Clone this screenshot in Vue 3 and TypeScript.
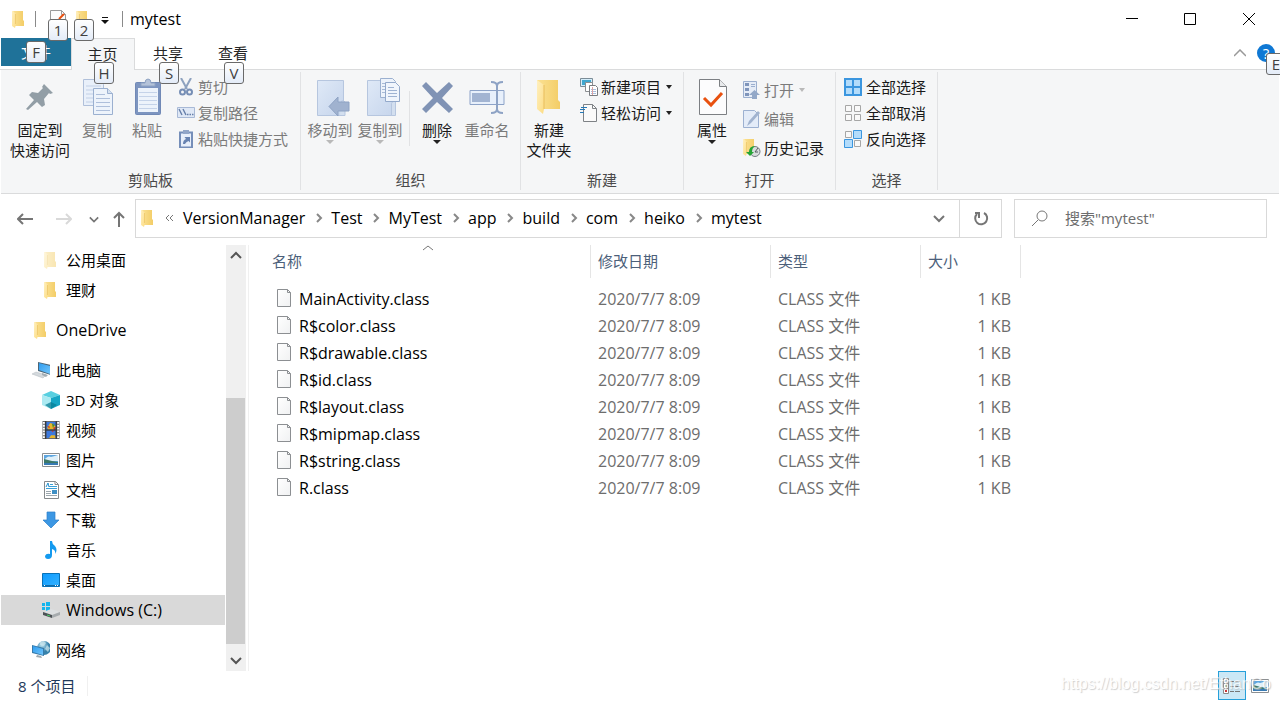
<script setup lang="ts">
interface TreeItem {
  label: string
  icon: string
  root?: boolean
  gap?: boolean
  selected?: boolean
  latin?: boolean
}

interface SmallCommand {
  label: string
  icon: string
  disabled?: boolean
  menu?: boolean
}

const tabs = [
  { label: '主页', key: 'H', active: true },
  { label: '共享', key: 'S', active: false },
  { label: '查看', key: 'V', active: false },
]

const clipboardCommands: SmallCommand[] = [
  { label: '剪切', icon: 'cut', disabled: true },
  { label: '复制路径', icon: 'copy-path', disabled: true },
  { label: '粘贴快捷方式', icon: 'paste-link', disabled: true },
]

const newCommands: SmallCommand[] = [
  { label: '新建项目', icon: 'new-item', menu: true },
  { label: '轻松访问', icon: 'easy-access', menu: true },
]

const openCommands: SmallCommand[] = [
  { label: '打开', icon: 'open', disabled: true, menu: true },
  { label: '编辑', icon: 'edit', disabled: true },
  { label: '历史记录', icon: 'history' },
]

const selectCommands: SmallCommand[] = [
  { label: '全部选择', icon: 'select-all' },
  { label: '全部取消', icon: 'select-none' },
  { label: '反向选择', icon: 'select-invert' },
]

const crumbs = ['VersionManager', 'Test', 'MyTest', 'app', 'build', 'com', 'heiko', 'mytest']

const tree: TreeItem[] = [
  { label: '公用桌面', icon: 'folder-pale' },
  { label: '理财', icon: 'folder' },
  { label: 'OneDrive', icon: 'folder', root: true, gap: true, latin: true },
  { label: '此电脑', icon: 'computer', root: true, gap: true },
  { label: '3D 对象', icon: 'cube' },
  { label: '视频', icon: 'video' },
  { label: '图片', icon: 'picture' },
  { label: '文档', icon: 'document' },
  { label: '下载', icon: 'download' },
  { label: '音乐', icon: 'music' },
  { label: '桌面', icon: 'desktop' },
  { label: 'Windows (C:)', icon: 'drive', selected: true, latin: true },
  { label: '网络', icon: 'network', root: true, gap: true },
]

const files = [
  'MainActivity.class',
  'R$color.class',
  'R$drawable.class',
  'R$id.class',
  'R$layout.class',
  'R$mipmap.class',
  'R$string.class',
  'R.class',
].map((name) => ({ name, date: '2020/7/7 8:09', type: 'CLASS 文件', size: '1 KB' }))
</script>

<template>
  <div class="window">
    <svg class="sprite" aria-hidden="true">
      <defs>
        <linearGradient id="gFolder" x1="0" x2="1"><stop offset="0" stop-color="#fbe193" /><stop offset="1" stop-color="#f3cd67" /></linearGradient>
        <linearGradient id="gFlap" x1="0" x2="1" y2="1"><stop offset="0" stop-color="#fff0c0" /><stop offset="1" stop-color="#fcdc83" /></linearGradient>
        <linearGradient id="gBlue" x2="1" y2="1"><stop offset="0" stop-color="#dfe9f7" /><stop offset="1" stop-color="#c6d5ec" /></linearGradient>
        <linearGradient id="gScreen" x2="1" y2="1"><stop offset="0" stop-color="#2f9df0" /><stop offset="1" stop-color="#72c5fa" /></linearGradient>
        <linearGradient id="gDesk" x2="1" y2="1"><stop offset="0" stop-color="#0d9bff" /><stop offset="1" stop-color="#35b2ff" /></linearGradient>
        <linearGradient id="gPaper" x2="1" y2="1"><stop offset="0" stop-color="#fff" /><stop offset="1" stop-color="#f0f1f2" /></linearGradient>
        <radialGradient id="gGlobe" cx=".35" cy=".3"><stop offset="0" stop-color="#b9e0ee" /><stop offset="1" stop-color="#3782ab" /></radialGradient>
      </defs>
      <symbol id="folder" viewBox="0 0 18 18">
        <path d="M3 1h10v9l1 1v5H4z" fill="url(#gFolder)" />
        <path d="M2 1h1l3 3v10l-1 4-3-2z" fill="url(#gFlap)" />
        <path d="M5.500 4v10" stroke="#f0cc72" />
      </symbol>
      <symbol id="folder-pale" viewBox="0 0 18 18"><g opacity=".5"><use href="#folder" width="18" height="18" /></g></symbol>
      <symbol id="folder-big" viewBox="0 0 40 40">
        <path d="M8 2h21v20l2 2v7H9z" fill="url(#gFolder)" />
        <path d="M8 2l7 5v24l-1 5-6-5z" fill="url(#gFlap)" />
        <path d="M15 7v24" stroke="#e8bd5c" />
      </symbol>
      <symbol id="pin" viewBox="0 0 40 40">
        <path d="M24 6l9 9-3 1-1-1-5 6 1 6-3 2-5-5-9 8-2-1 8-9-5-5 3-3 6 1 5-5-1-1z" fill="#929ea6" />
      </symbol>
      <symbol id="copy" viewBox="0 0 40 40">
        <path d="M6.500 1.500h15l5 5v21h-20z" fill="#e9f0fa" stroke="#b0c0da" />
        <path d="M9 8h15M9 12h15M9 16h8M9 20h8M9 24h8" stroke="#c2d0e6" />
        <path d="M16.500 10.500h14l5 5v21h-19z" fill="#edf3fb" stroke="#9bb0d0" />
        <path d="M30.500 10.500v5h5" fill="#d4e0f0" stroke="#9bb0d0" />
        <path d="M19 16.500h9M19 20.500h14M19 24.500h14M19 28.500h14M19 32.500h14" stroke="#aebfdb" />
      </symbol>
      <symbol id="paste" viewBox="0 0 40 40">
        <rect x="8.500" y="4.500" width="25" height="32" rx="1" fill="#7d95c0" stroke="#7189b6" />
        <path d="M11 10h20v24H11z" fill="#edf3fb" />
        <path d="M12 14.500h18M12 18.500h18M12 22.500h18M12 26.500h18M12 30.500h18" stroke="#c5d3e9" />
        <path d="M14 8V5h4q0-4 3-4t3 4h4v3z" fill="#b5c3d9" stroke="#8fa3c3" />
      </symbol>
      <symbol id="cut" viewBox="0 0 18 18">
        <path d="M4 0l6 11M14 0L8 11" fill="none" stroke="#8ea2bf" stroke-width="2" />
        <circle cx="5.500" cy="14" r="2.500" fill="none" stroke="#768eb5" stroke-width="2" />
        <circle cx="12.500" cy="14" r="2.500" fill="none" stroke="#768eb5" stroke-width="2" />
      </symbol>
      <symbol id="copy-path" viewBox="0 0 18 18">
        <path d="M.5 3.500h17v10H.5z" fill="#dfe8f6" stroke="#a8b9d6" />
        <path d="M2 5l3 6M6 5l3 6M10 10.500h1.500M12.500 10.500H14M15 10.500h1.500" stroke="#667fa9" stroke-width="1.400" />
      </symbol>
      <symbol id="paste-link" viewBox="0 0 18 18">
        <path d="M3 2.500h12v15H3z" fill="#e8effa" stroke="#758eb9" stroke-width="2" />
        <path d="M6 0h6v4H6z" fill="#92a6c8" />
        <path d="M6 14q0-4 3-5L7.500 7H13v5.500L11.500 11Q9 12 8 14z" fill="#6883b1" />
      </symbol>
      <symbol id="move-to" viewBox="0 0 40 40">
        <path d="M7.500 2.500h26v35h-26z" fill="url(#gBlue)" stroke="#b6c6df" />
        <path d="M31 23.500q4-2 4 2v12h-5" fill="#d3dfef" stroke="#b6c6df" />
        <path d="M19 28.500L28 19v5h11v9H28v5z" fill="#a0b2cf" stroke="#8ea3c4" />
      </symbol>
      <symbol id="copy-to" viewBox="0 0 40 40">
        <path d="M7.500 2.500h27v35h-27z" fill="url(#gBlue)" stroke="#b6c6df" />
        <path d="M31.500 37.500v-12q1-4 4-2v14z" fill="#d3dfef" stroke="#b6c6df" />
        <path d="M20.500.5h12l3 3v16h-15z" fill="#edf3fb" stroke="#9bb0d0" />
        <path d="M22 5.500h8M22 8.500h4M22 11.500h4M22 14.500h4" stroke="#a9bbd6" />
        <path d="M25.500 4.500h10l4 4v15h-14z" fill="#f0f5fc" stroke="#93a9cb" />
        <path d="M28 9.500h6M28 12.500h9M28 15.500h9M28 18.500h9" stroke="#9fb3d2" />
      </symbol>
      <symbol id="delete" viewBox="0 0 40 40">
        <path d="M5 8l4-4 11 11L32 4l4 4-11 12 11 11-4 4-12-11L9 35l-4-4 11-11z" fill="#8093b5" />
      </symbol>
      <symbol id="rename" viewBox="0 0 40 40">
        <path d="M3 12.500h34v14H3z" fill="#e8f0fb" stroke="#8da3c8" />
        <path d="M5 15h18v9H5z" fill="#a2b4d2" />
        <path d="M24 4q6 0 6 4v23q0 4-6 4M36 4q-6 0-6 4v23q0 4 6 4" fill="none" stroke="#8ea3c5" stroke-width="2" />
      </symbol>
      <symbol id="properties" viewBox="0 0 40 40">
        <path d="M7.500 1.500h20l7 7v28h-27z" fill="#fcfcfd" stroke="#7c7f83" />
        <path d="M27.500 1.500v7h7" fill="#e8eaec" stroke="#7c7f83" />
        <path d="M12 20l7 7 11-12" fill="none" stroke="#e8500f" stroke-width="3" />
      </symbol>
      <symbol id="new-item" viewBox="0 0 18 18">
        <path d="M.5.500h12v8H.5z" fill="#d4edfa" stroke="#7b8c97" />
        <path d="M2 2h9v5H2z" fill="#40a7cf" />
        <path d="M5.500 4.500h7v9h-7z" fill="#fff" stroke="#8b8e91" />
        <path d="M9.500 7.500h6l2 2v8h-8z" fill="#fff" stroke="#797c80" />
        <path d="M11 11.500h5M11 13.500h5M11 15.500h5" stroke="#a9bddb" />
        <path d="M12.500 9v8" stroke="#dda2a2" />
      </symbol>
      <symbol id="easy-access" viewBox="0 0 18 18">
        <path d="M3.500.5h9l4 4v13h-13z" fill="#fafafa" stroke="#7e8286" />
        <path d="M12.500.5v4h4" fill="none" stroke="#7e8286" />
        <path d="M1 3.500h6M0 5.500h5M0 8.500h4" stroke="#2679b7" />
      </symbol>
      <symbol id="open" viewBox="0 0 18 18">
        <path d="M.5.500h13v16H.5z" fill="#e5ecf7" stroke="#9bafcf" />
        <path d="M2 2h4v3H2zM2 7h4v3H2zM2 12h4v3H2z" fill="#7f95bb" />
        <path d="M8 3.500h4M8 5.500h4" stroke="#9bafcf" />
        <path d="M11.500 9l5.500 5h-3v4H9v-4H6z" fill="#93a8c8" />
      </symbol>
      <symbol id="edit" viewBox="0 0 18 18">
        <path d="M.5.500h11l4 4v13H.5z" fill="#e4ecf8" stroke="#9db1d1" />
        <path d="M4 16l2-5L15 1l2 2-9 10z" fill="#a1b3cf" />
      </symbol>
      <symbol id="history" viewBox="0 0 18 18">
        <use href="#folder" x="-2" y="-1" width="18" height="18" />
        <circle cx="12" cy="12.500" r="5" fill="#d8dcdd" stroke="#747d82" />
        <path d="M12 13l3-4M12 13h3" stroke="#555e63" />
        <path d="M12 7q-6 0-6 6H3l4 4 4-4H9q0-4 3-6z" fill="#25a435" />
      </symbol>
      <symbol id="select-all" viewBox="0 0 18 18">
        <path d="M0 0h18v18H0z" fill="#3b96df" />
        <path d="M2 2h6v6H2zM10 2h6v6h-6zM2 10h6v6H2zM10 10h6v6h-6z" fill="#b3dcfb" />
      </symbol>
      <symbol id="select-none" viewBox="0 0 18 18">
        <path d="M1.500 1.500h6v6h-6zM10.500 1.500h6v6h-6zM1.500 10.500h6v6h-6zM10.500 10.500h6v6h-6z" fill="#f9f9f9" stroke="#a6a6a6" />
      </symbol>
      <symbol id="select-invert" viewBox="0 0 18 18">
        <path d="M1.500 1.500h6v6h-6zM10.500 10.500h6v6h-6z" fill="#f9f9f9" stroke="#a6a6a6" />
        <path d="M9.500.500h8v8h-8zM.5 9.500h8v8h-8z" fill="#b3dcfb" stroke="#3b96df" />
      </symbol>
      <symbol id="computer" viewBox="0 0 18 18">
        <path d="M6 1l13 3v10L6 10z" fill="#4b6577" />
        <path d="M7 2l11 3v8L7 9z" fill="url(#gScreen)" />
        <path d="M0 13l4-2 10 3-3 3z" fill="#d4d9dd" stroke="#b1b9be" stroke-width=".5" />
        <path d="M10 12l6 2-2 2-4-2z" fill="#a3adb3" />
      </symbol>
      <symbol id="cube" viewBox="0 0 18 18">
        <path d="M0 4l9-4 9 4-9 3z" fill="#58cfe0" />
        <path d="M0 4l9 3v11l-9-4z" fill="#abeaf2" />
        <path d="M18 4L9 7v11l9-4z" fill="#16a6c5" />
        <path d="M3 14l6-3 6 3-6 4z" fill="#087d94" opacity=".75" />
      </symbol>
      <symbol id="video" viewBox="0 0 18 19">
        <path d="M0 0h18v19H0z" fill="#67696b" />
        <path d="M1.500 1v17M16.500 1v17" stroke="#fff" stroke-width="2" stroke-dasharray="2 1" />
        <path d="M4 1h10v8H4zM4 10h10v8H4z" fill="#3c79dd" />
        <path d="M5 7l3-5 3 1 3 3-2 3H6zM7 18l2-3h4l1 3z" fill="#e6b52b" />
        <path d="M5 5l3 1-1 2zM11 7l3-1-1 4zM9 10h3l-1 2z" fill="#cf3929" />
        <path d="M10 3l3 1-2 3z" fill="#438c36" />
        <path d="M3.500 0v19M14.500 0v19M4 9.500h10" stroke="#242628" />
      </symbol>
      <symbol id="picture" viewBox="0 0 18 18">
        <path d="M.5 2.500h17v13H.5z" fill="#fff" stroke="#8b8f92" />
        <path d="M2 4h14v10H2z" fill="#5da5df" />
        <path d="M2 9q4-5 7-3 4-1 7-2v6H2z" fill="#dff0f9" />
        <path d="M2 8l4 1 4 1 6 1v2H2z" fill="#3c7868" />
        <path d="M2 12h14v2H2z" fill="#377ab4" />
      </symbol>
      <symbol id="document" viewBox="0 0 18 18">
        <path d="M2.500.500h11l3 3v14h-14z" fill="#fff" stroke="#85898c" />
        <path d="M13 .5v3h3" fill="none" stroke="#85898c" />
        <path d="M8 3.500h3M7 5.500h8M4 7.500h11" stroke="#3ba0d7" />
        <path d="M4 10.500h5M4 12.500h5M4 14.500h11" fill="none" stroke="#9ba6ad" />
        <path d="M4 6l2-4 1 4" fill="none" stroke="#2491cf" />
        <path d="M10 9h5v4h-5z" fill="#3f8fc4" />
      </symbol>
      <symbol id="download" viewBox="0 0 18 18">
        <path d="M5 1h8v8h4l-8 8-8-8h4z" fill="#3c97e3" stroke="#2c7fc9" stroke-width=".7" />
      </symbol>
      <symbol id="music" viewBox="0 0 18 18">
        <path d="M8 0h2q0 3 3 5 3 4 0 8 1-4-3-5v6q0 4-4 4-3 0-3-3 1-3 5-2z" fill="#149aef" />
      </symbol>
      <symbol id="desktop" viewBox="0 0 18 18">
        <path d="M.5 2.500h17v13H.5z" fill="url(#gDesk)" stroke="#0872b8" />
        <path d="M1 14.500h16" stroke="#126ba7" /><path d="M2 14.500h1M13 14.500h1M15 14.500h1" stroke="#fff" />
      </symbol>
      <symbol id="drive" viewBox="0 0 18 18">
        <path d="M0 2h3v3H0zM4 1h4v4H4zM0 6h3v3H0zM4 6h4v4H4z" fill="#15b5ed" />
        <path d="M1 11l8-3 9 3-8 3z" fill="#dcdfe1" />
        <path d="M1 11l9 3v3l-9-3z" fill="#4c5256" />
        <path d="M10 14l8-3v3l-8 3z" fill="#a6abae" /><path d="M5 14l3 1" stroke="#48cd63" />
      </symbol>
      <symbol id="network" viewBox="0 0 18 18">
        <circle cx="12" cy="7" r="7" fill="url(#gGlobe)" />
        <path d="M8 1l4-1 2 2-2 3-4-1zM15 4l3 3-2 4-3-3z" fill="#d1eaf0" opacity=".7" />
        <path d="M0 4l12 3v8L0 12z" fill="#377bab" /><path d="M1 5l10 3v6L1 11z" fill="url(#gScreen)" />
        <path d="M5 14l4 1 1 2-6-1z" fill="#9ea8ad" />
      </symbol>
      <symbol id="file" viewBox="0 0 18 20">
        <path d="M1.500.5h10l3 3v14h-13z" fill="url(#gPaper)" stroke="#8c8f92" />
        <path d="M11.500.5v3h3" fill="none" stroke="#8c8f92" />
      </symbol>
      <symbol id="chevron-down" viewBox="0 0 12 12"><path d="M1 4l5 5 5-5" fill="none" stroke="currentColor" stroke-width="2" /></symbol>
      <symbol id="chevron-up" viewBox="0 0 12 12"><path d="M1 8l5-5 5 5" fill="none" stroke="currentColor" stroke-width="2" /></symbol>
    </svg>

    <header class="titlebar">
      <svg class="i18 app-icon"><use href="#folder" /></svg>
      <span class="title-rule"></span>
      <button class="quick" aria-label="属性">
        <svg width="16" height="18" viewBox="0 0 16 18"><path d="M.5.500h11l4 4v13H.5z" fill="#fbfbfb" stroke="#999" /><path d="M11.500.500v4h4" fill="none" stroke="#999" /><path d="M9 9l5-5" stroke="#e8500f" stroke-width="2" /></svg>
        <kbd class="keytip">1</kbd>
      </button>
      <button class="quick" aria-label="新建文件夹">
        <svg class="i18"><use href="#folder" /></svg>
        <kbd class="keytip">2</kbd>
      </button>
      <button class="customize" aria-label="自定义快速访问工具栏">
        <svg width="8" height="8" viewBox="0 0 8 8"><path d="M1 1.500h6" stroke="#111" /><path d="M0 4h8L4 8z" fill="#111" /></svg>
      </button>
      <span class="title-rule"></span>
      <h1 class="title">mytest</h1>
      <div class="controls">
        <button aria-label="最小化"><svg width="12" height="12"><path d="M0 5.500h12" stroke="#000" /></svg></button>
        <button aria-label="最大化"><svg width="12" height="12"><path d="M.5.500h11v11H.5z" fill="none" stroke="#000" /></svg></button>
        <button aria-label="关闭"><svg width="12" height="12"><path d="M0 0l12 12M12 0L0 12" stroke="#000" /></svg></button>
      </div>
    </header>

    <nav class="tabs">
      <button class="tab file">文件<kbd class="keytip">F</kbd></button>
      <button v-for="t in tabs" :key="t.key" class="tab" :class="{ active: t.active }">
        {{ t.label }}<kbd class="keytip">{{ t.key }}</kbd>
      </button>
      <span class="spacer"></span>
      <button class="collapse" aria-label="最小化功能区">
        <svg width="12" height="8" viewBox="0 0 12 8"><path d="M0 7l6-6 6 6" fill="none" stroke="#999" stroke-width="1.500" /></svg>
      </button>
      <button class="help" aria-label="帮助"><span class="help-mark">?</span><kbd class="keytip">E</kbd></button>
    </nav>

    <section class="ribbon">
      <div class="group g-clipboard">
        <div class="commands">
          <button class="big wide"><svg class="i40"><use href="#pin" /></svg><span>固定到<br />快速访问</span></button>
          <button class="big off"><svg class="i40"><use href="#copy" /></svg><span>复制</span></button>
          <button class="big off"><svg class="i40"><use href="#paste" /></svg><span>粘贴</span></button>
          <div class="stack">
            <button v-for="c in clipboardCommands" :key="c.icon" class="small" :class="{ off: c.disabled }">
              <svg class="i18"><use :href="'#' + c.icon" /></svg><span>{{ c.label }}</span>
            </button>
          </div>
        </div>
        <h2>剪贴板</h2>
      </div>
      <div class="group g-organize">
        <div class="commands">
          <button class="big off"><svg class="i40"><use href="#move-to" /></svg><span>移动到</span><i class="arrow"></i></button>
          <button class="big off"><svg class="i40"><use href="#copy-to" /></svg><span>复制到</span><i class="arrow"></i></button>
          <span class="divider"></span>
          <button class="big"><svg class="i40"><use href="#delete" /></svg><span>删除</span><i class="arrow"></i></button>
          <button class="big off"><svg class="i40"><use href="#rename" /></svg><span>重命名</span></button>
        </div>
        <h2>组织</h2>
      </div>
      <div class="group g-new">
        <div class="commands">
          <button class="big"><svg class="i40"><use href="#folder-big" /></svg><span>新建<br />文件夹</span></button>
          <div class="stack">
            <button v-for="c in newCommands" :key="c.icon" class="small">
              <svg class="i18"><use :href="'#' + c.icon" /></svg><span>{{ c.label }}</span><i class="arrow"></i>
            </button>
          </div>
        </div>
        <h2>新建</h2>
      </div>
      <div class="group g-open">
        <div class="commands">
          <button class="big"><svg class="i40"><use href="#properties" /></svg><span>属性</span><i class="arrow"></i></button>
          <div class="stack loose">
            <button v-for="c in openCommands" :key="c.icon" class="small" :class="{ off: c.disabled }">
              <svg class="i18"><use :href="'#' + c.icon" /></svg><span>{{ c.label }}</span><i v-if="c.menu" class="arrow"></i>
            </button>
          </div>
        </div>
        <h2>打开</h2>
      </div>
      <div class="group g-select">
        <div class="commands">
          <div class="stack">
            <button v-for="c in selectCommands" :key="c.icon" class="small">
              <svg class="i18"><use :href="'#' + c.icon" /></svg><span>{{ c.label }}</span>
            </button>
          </div>
        </div>
        <h2>选择</h2>
      </div>
    </section>

    <div class="navbar">
      <div class="history-buttons">
        <button aria-label="返回"><svg width="16" height="14" viewBox="0 0 16 14"><path d="M6 2L1 7l5 5M1 7h15" fill="none" stroke="#757575" stroke-width="2" /></svg></button>
        <button aria-label="前进"><svg width="16" height="14" viewBox="0 0 16 14"><path d="M10 2l5 5-5 5M15 7H0" fill="none" stroke="#d9d9d9" stroke-width="2" /></svg></button>
        <button class="recent" aria-label="最近浏览的位置"><svg width="10" height="10"><use href="#chevron-down" /></svg></button>
        <button class="up" aria-label="上移"><svg width="12" height="16" viewBox="0 0 12 16"><path d="M1 7l5-5 5 5M6 2v14" fill="none" stroke="#757575" stroke-width="2" /></svg></button>
      </div>
      <div class="address">
        <svg class="i18"><use href="#folder" /></svg>
        <button class="more" aria-label="更多位置"><svg width="9" height="8" viewBox="0 0 9 8"><path d="M4 1L1 4l3 3M8 1L5 4l3 3" fill="none" stroke="#777" /></svg></button>
        <template v-for="(c, i) in crumbs" :key="c">
          <svg v-if="i > 0" class="sep" viewBox="0 0 8 10"><path d="M2 1l4 4-4 4" fill="none" stroke="#888" stroke-width="2" /></svg>
          <button class="crumb">{{ c }}</button>
        </template>
        <span class="spacer"></span>
        <button class="drop" aria-label="以前的位置"><svg width="12" height="12"><use href="#chevron-down" /></svg></button>
        <button class="refresh" aria-label="刷新"><svg width="16" height="16" viewBox="0 0 16 16"><path d="M4 3a6 6 0 1 0 7-1" fill="none" stroke="#757575" stroke-width="2" /><path d="M2 2h4v5" fill="none" stroke="#757575" stroke-width="2" /></svg></button>
      </div>
      <label class="search">
        <svg width="16" height="16" viewBox="0 0 16 16"><circle cx="10" cy="6" r="5" fill="none" stroke="#777" /><path d="M6 10l-6 6" stroke="#777" /></svg>
        <input type="text" aria-label="搜索" placeholder="搜索&quot;mytest&quot;" />
      </label>
    </div>

    <main class="body">
      <aside class="tree">
        <a v-for="n in tree" :key="n.label" href="#" class="node" :class="{ root: n.root, gap: n.gap, selected: n.selected, latin: n.latin }">
          <svg class="i18"><use :href="'#' + n.icon" /></svg><span>{{ n.label }}</span>
        </a>
      </aside>
      <div class="scrollbar">
        <button aria-label="向上滚动"><svg width="12" height="12"><use href="#chevron-up" /></svg></button>
        <span class="track"></span>
        <span class="thumb"></span>
        <button aria-label="向下滚动"><svg width="12" height="12"><use href="#chevron-down" /></svg></button>
      </div>
      <div class="files">
        <table>
          <thead>
            <tr>
              <th class="c-name">名称<svg class="sort" width="10" height="6" viewBox="0 0 10 6"><path d="M0 5l5-4 5 4" fill="none" stroke="#777" /></svg></th>
              <th class="c-date">修改日期</th>
              <th class="c-type">类型</th>
              <th class="c-size">大小</th>
            </tr>
          </thead>
          <tbody>
            <tr v-for="f in files" :key="f.name">
              <td class="name"><div><svg width="18" height="20"><use href="#file" /></svg><span>{{ f.name }}</span></div></td>
              <td>{{ f.date }}</td>
              <td>{{ f.type }}</td>
              <td class="size">{{ f.size }}</td>
            </tr>
          </tbody>
        </table>
      </div>
    </main>

    <footer class="status">
      <span class="count">8 个项目</span>
      <span class="spacer"></span>
      <button class="view on" aria-label="详细信息">
        <svg width="18" height="18" viewBox="0 0 18 18"><path d="M.5 1.500h5v15h-5zM.5 6.500h5M.5 11.500h5" fill="#fff" stroke="#888" /><path d="M2 4h2" stroke="#447bb0" stroke-width="2" /><path d="M2 9h2" stroke="#487b52" stroke-width="2" /><path d="M2 14h2" stroke="#c33" stroke-width="2" /><path d="M7 4.500h4M12 4.500h5M7 9.500h4M12 9.500h5M7 14.500h4M12 14.500h5" stroke="#777" /></svg>
      </button>
      <button class="view" aria-label="大缩略图"><svg class="i18"><use href="#picture" /></svg></button>
      <span class="watermark">https://blog.csdn.net/EthanCo</span>
    </footer>
  </div>
</template>

<style>
html,
body {
  margin: 0;
  background: #fff;
}
</style>

<style scoped>
* {
  box-sizing: border-box;
}
.window {
  display: flex;
  flex-direction: column;
  min-height: 100vh;
  overflow: hidden;
  background: #fff;
  color: #1a1a1a;
  font: 15px/20px "Open Sans", "Noto Sans CJK SC", sans-serif;
}
.sprite {
  position: absolute;
  width: 0;
  height: 0;
}
button {
  display: flex;
  align-items: center;
  padding: 0;
  border: 0;
  background: none;
  color: inherit;
  font: inherit;
}
svg {
  display: block;
  flex: none;
}
.i18 {
  width: 18px;
  height: 18px;
}
.i40 {
  width: 40px;
  height: 40px;
}
.spacer {
  flex: 1;
}
.keytip {
  position: absolute;
  z-index: 2;
  width: 20px;
  height: 22px;
  border: 1px solid #6a6a6a;
  border-radius: 3px;
  background: linear-gradient(#fff, #e4ecf8);
  color: #404040;
  font: inherit;
  line-height: 20px;
  text-align: center;
}

.titlebar {
  display: flex;
  align-items: center;
  height: 38px;
  padding-left: 10px;
}
.title-rule {
  width: 1px;
  height: 16px;
  background: #8a8a8a;
}
.app-icon {
  margin-right: 7px;
}
.quick {
  position: relative;
  margin-left: 14px;
}
.quick + .quick {
  margin-left: 8px;
}
.quick .keytip {
  top: 9px;
  left: -2px;
}
.quick + .quick .keytip {
  left: 0;
}
.customize {
  margin: 2px 13px 0 9px;
}
.title {
  flex: 1;
  margin: 0 0 0 7px;
  color: #000;
  font: inherit;
  font-size: 16px;
}
.controls {
  display: flex;
  padding-right: 1px;
}
.controls button {
  justify-content: center;
  width: 58px;
  height: 38px;
}
.controls button:last-child {
  width: 60px;
}

.tabs {
  display: flex;
  height: 32px;
  padding-left: 1px;
  border-bottom: 1px solid #dadbdc;
}
.tab {
  position: relative;
  justify-content: center;
  width: 65px;
  height: 31px;
  padding: 0 1px 2px 0;
  color: #262626;
}
.tab .keytip {
  top: 24px;
  left: 23px;
}
.tab.file {
  width: 70px;
  height: 28px;
  padding: 0;
  background: #1f7299;
  color: #fff;
}
.tab.file .keytip {
  top: 3px;
  left: 25px;
}
.tab.active {
  width: 64px;
  height: 32px;
  margin-right: 1px;
  border: 1px solid #dadbdc;
  border-bottom: 0;
  background: #f5f6f7;
}
.tab.active .keytip {
  top: 23px;
  left: 22px;
}
.collapse {
  margin-right: 11px;
  padding-bottom: 2px;
}
.help {
  position: relative;
  width: 23px;
  padding-bottom: 2px;
}
.help-mark {
  width: 18px;
  height: 18px;
  border-radius: 50%;
  background: #0f78d4;
  color: #fff;
  line-height: 18px;
  text-align: center;
}
.help .keytip {
  top: 15px;
  left: 9px;
}

.ribbon {
  display: flex;
  height: 124px;
  margin: 0 1px;
  padding: 2px 0 3px;
  border-bottom: 1px solid #dadbdc;
  background: #f5f6f7;
}
.group {
  display: flex;
  flex-direction: column;
  justify-content: space-between;
  border-right: 1px solid #e1e2e4;
}
.g-clipboard {
  width: 300px;
}
.g-organize {
  width: 220px;
}
.g-new {
  width: 163px;
}
.g-open {
  width: 152px;
}
.g-select {
  width: 102px;
}
.group h2 {
  margin: 0;
  color: #4a4a4a;
  font: inherit;
  text-align: center;
}
.commands {
  display: flex;
  padding-left: 3px;
}
.g-clipboard .commands {
  padding-left: 7px;
}
.g-organize .commands {
  padding-left: 4px;
}
.g-select .commands {
  padding-left: 8px;
}
.big {
  flex-direction: column;
  justify-content: flex-start;
  width: 50px;
  padding-top: 6px;
  white-space: nowrap;
}
.big svg {
  margin-bottom: 2px;
}
.big.wide {
  width: 64px;
}
.arrow {
  border: solid transparent;
  border-width: 4px 4px 0;
  border-top-color: #222;
}
.small .arrow {
  margin-left: 2px;
  border-width: 4px 3px 0;
}
.off {
  color: #7b7b7b;
}
.off .arrow {
  border-top-color: #b9b9b9;
}
.divider {
  width: 1px;
  height: 55px;
  margin: 19px 2px 0 4px;
  background: #e1e2e4;
}
.stack {
  padding: 2px 0 0 6px;
}
.g-clipboard .stack {
  padding-left: 5px;
}
.g-select .stack {
  padding-left: 0;
}
.stack.loose {
  padding-top: 3px;
}
.small {
  height: 26px;
  gap: 3px;
  white-space: nowrap;
}
.g-select .small {
  gap: 4px;
}
.loose .small {
  height: 29px;
}

.navbar {
  display: flex;
  align-items: center;
  height: 51px;
  padding: 0 13px 2px 0;
}
.history-buttons {
  display: flex;
  align-items: center;
  width: 135px;
  padding-left: 17px;
  color: #757575;
}
.history-buttons button + button {
  margin-left: 23px;
}
.history-buttons .recent {
  margin-left: 17px;
}
.history-buttons .up {
  margin-left: 14px;
}
.address {
  display: flex;
  flex: 1;
  align-items: center;
  height: 39px;
  padding: 0 0 1px 3px;
  border: 1px solid #d9d9d9;
  color: #000;
}
.more {
  margin: 0 9px 0 8px;
}
.crumb {
  font-size: 16px;
}
.sep {
  width: 8px;
  height: 10px;
  margin: 0 8px 0 10px;
}
.drop {
  margin-right: 14px;
  color: #757575;
}
.refresh {
  justify-content: center;
  width: 42px;
  height: 37px;
  margin-bottom: -1px;
  border-left: 1px solid #d9d9d9;
}
.search {
  display: flex;
  align-items: center;
  width: 253px;
  height: 39px;
  margin-left: 12px;
  padding: 0 0 1px 17px;
  border: 1px solid #d9d9d9;
}
.search input {
  flex: 1;
  min-width: 0;
  margin-left: 17px;
  padding: 0;
  border: 0;
  outline: 0;
  background: none;
  font: inherit;
}
.search input::placeholder {
  color: #6d6d6d;
  opacity: 1;
}

.body {
  display: flex;
  flex: 1;
}
.tree {
  width: 225px;
  padding-left: 1px;
}
.node {
  display: flex;
  align-items: center;
  gap: 6px;
  height: 30px;
  padding-left: 41px;
  color: #000;
  text-decoration: none;
}
.node.root {
  padding-left: 31px;
}
.node.gap {
  margin-top: 10px;
}
.node.latin {
  font-size: 16px;
}
.node.selected {
  background: #d9d9d9;
}
.scrollbar {
  display: flex;
  flex-direction: column;
  width: 20px;
  margin-left: 1px;
  background: #f0f0f0;
  color: #555;
}
.scrollbar button {
  justify-content: center;
  width: 19px;
  height: 22px;
}
.scrollbar .track {
  flex: 131;
}
.scrollbar .thumb {
  flex: 246;
  width: 19px;
  margin-bottom: 5px;
  background: #cdcdcd;
}
.files {
  flex: 1;
  margin-left: 2px;
  border-left: 1px solid #f0f0f0;
}
table {
  border-spacing: 0;
  table-layout: fixed;
  width: 772px;
}
th {
  position: relative;
  height: 33px;
  padding: 0 0 1px 7px;
  border-right: 1px solid #e5e5e5;
  color: #4c607a;
  font-weight: 400;
  text-align: left;
}
.c-name {
  width: 342px;
  padding-left: 23px;
}
.c-date {
  width: 180px;
}
.c-type {
  width: 150px;
}
.c-size {
  width: 100px;
}
.sort {
  position: absolute;
  top: 0;
  left: 51%;
}
tbody {
  font-size: 16px;
}
tbody::before {
  display: block;
  height: 7px;
  content: "";
}
td {
  height: 27px;
  padding: 0 0 0 7px;
  color: #6d6d6d;
}
td.name {
  padding-left: 27px;
  color: #000;
}
td.name div {
  display: flex;
  align-items: center;
  gap: 5px;
}
td.size {
  padding-right: 10px;
  text-align: right;
}

.status {
  position: relative;
  display: flex;
  align-items: center;
  height: 30px;
  padding: 0 6px 1px 0;
}
.count {
  padding: 0 12px 0 18px;
  border-right: 1px solid #f0f0f0;
  color: #1e395b;
}
.view {
  justify-content: center;
  width: 28px;
  height: 29px;
}
.view.on {
  border: 1px solid #26a0da;
  background: #cbe8f6;
}
.watermark {
  position: absolute;
  right: 9px;
  bottom: 7px;
  color: #fff;
  font: 16px/20px "Liberation Sans", sans-serif;
  opacity: 0.7;
  text-shadow: 1px 1px 1px #bbb;
  pointer-events: none;
}
</style>
